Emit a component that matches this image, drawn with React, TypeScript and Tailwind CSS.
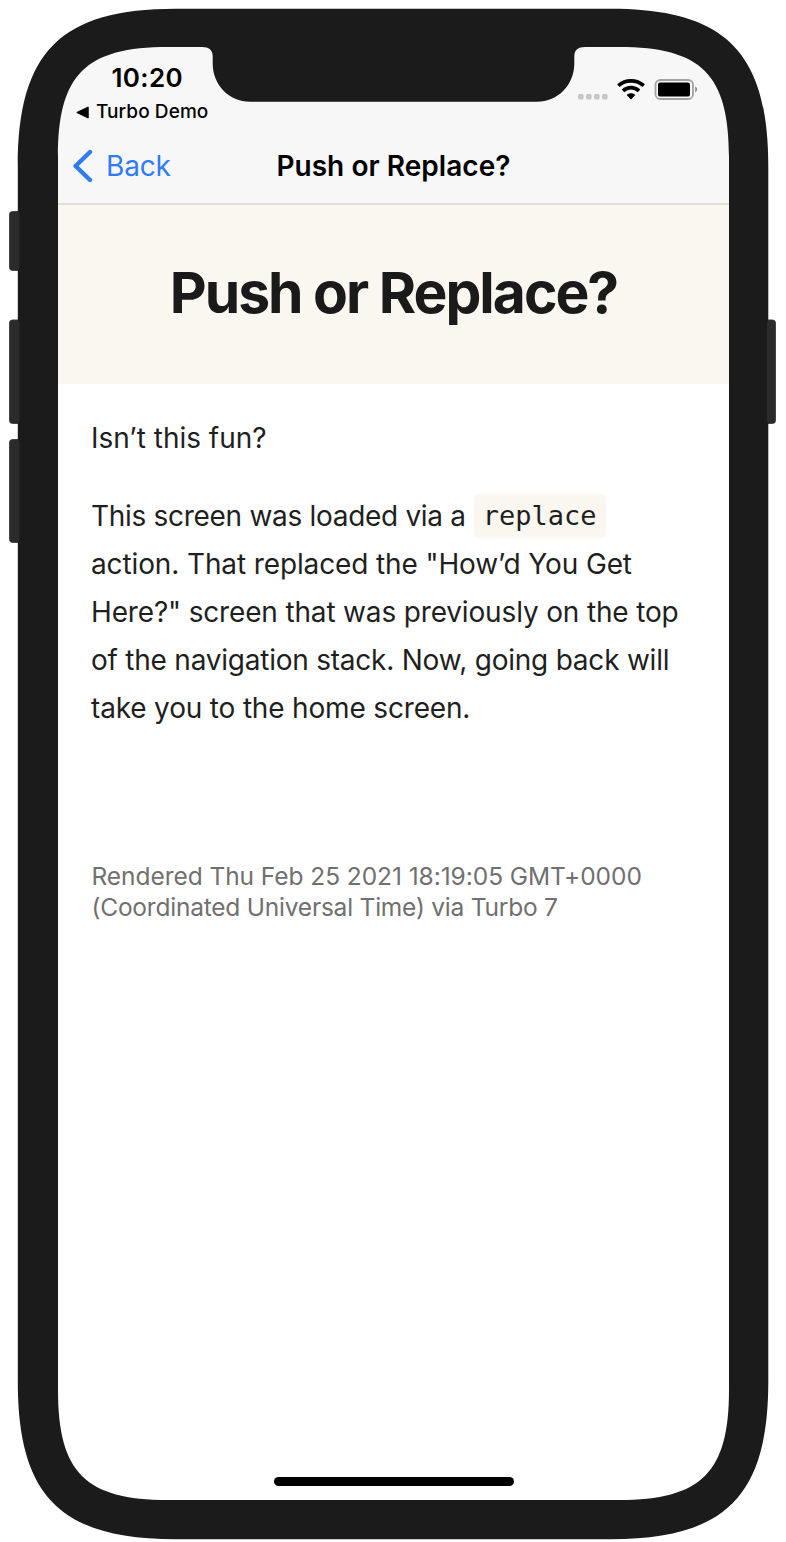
// Rounded rectangle whose corners run along one long cubic: `e` is the corner's extent, `k` its handle distance.
const smooth = (x: number, y: number, w: number, h: number, e: number, k: number) => {
  const R = x + w;
  const B = y + h;
  return [
    `M${x + e} ${y}H${R - e}`,
    `C${R - k} ${y} ${R} ${y + k} ${R} ${y + e}`,
    `V${B - e}`,
    `C${R} ${B - k} ${R - k} ${B} ${R - e} ${B}`,
    `H${x + e}`,
    `C${x + k} ${B} ${x} ${B - k} ${x} ${B - e}`,
    `V${y + e}`,
    `C${x} ${y + k} ${x + k} ${y} ${x + e} ${y}Z`,
  ].join("");
};

function DeviceBezel() {
  return (
    <svg className="pointer-events-none absolute inset-0" width="786" height="1542" viewBox="0 0 786 1542" aria-hidden="true">
      <g fill="#2b2b2b" stroke="#454545" strokeWidth="1">
        <rect x="9.5" y="211.5" width="14" height="59" rx="3" />
        <rect x="9.5" y="320" width="14" height="103.5" rx="3" />
        <rect x="9.5" y="439.5" width="14" height="103" rx="3" />
        <rect x="762" y="320" width="13.5" height="103.5" rx="3" />
      </g>
      <path
        fill="#1b1b1b"
        fillRule="evenodd"
        d={smooth(17.8, 8.8, 750.5, 1530.4, 158, 43) + smooth(58, 47, 671, 1453, 110, 27.5)}
      />
      <path
        fill="#1b1b1b"
        d="M202 46V47C209 47 212.5 50 212.7 56V64C213 85 229 101.7 250 101.7H537C558 101.7 574 85 574.3 64V56C574.5 50 578 47 585 47V46Z"
      />
      <g fill="#2b2b2b">
        <rect x="10" y="212" width="9.5" height="58" rx="2" />
        <rect x="10" y="320.5" width="9.5" height="102.5" rx="2" />
        <rect x="10" y="440" width="9.5" height="102" rx="2" />
        <rect x="767" y="320.5" width="8" height="102.5" rx="2" />
      </g>
    </svg>
  );
}

function StatusIcons() {
  return (
    <svg width="122" height="24" viewBox="0 0 122 24" aria-hidden="true">
      <g fill="#c6c6c7">
        <rect x="0" y="16" width="5.6" height="5.4" rx="1.6" />
        <rect x="8" y="16" width="5.6" height="5.4" rx="1.6" />
        <rect x="16" y="16" width="5.6" height="5.4" rx="1.6" />
        <rect x="24" y="16" width="5.6" height="5.4" rx="1.6" />
      </g>
      <g fill="none" stroke="#000" strokeWidth="3.7">
        <path d="M40.3 7.6C47.5 1.3 58.5 1.3 65.7 7.6" />
        <path d="M45 12.8C49.6 8.6 56.4 8.6 61 12.8" />
      </g>
      <path d="M48.7 17C51 14.7 55 14.7 57.3 17L53.6 20.9Q53 21.5 52.4 20.9Z" fill="#000" />
      <rect x="77.5" y="2" width="37.5" height="19" rx="4.8" fill="none" stroke="#a2a2a2" strokeWidth="1.8" />
      <rect x="80" y="4.4" width="32" height="14.2" rx="2.2" fill="#000" />
      <path d="M117.2 8.6C119.8 9.8 119.8 13.2 117.2 14.4Z" fill="#8a8a8a" />
    </svg>
  );
}

export default function App() {
  return (
    <div className="relative h-[1542px] w-[786px] overflow-hidden bg-white pt-[47px] pl-[58px] font-['Inter',sans-serif]">
      <div className="flex h-[1453px] w-[671px] flex-col bg-white">
        <header className="h-[158px] border-b-2 border-[#dfdfde] bg-[#f7f7f7] text-black">
          <div className="flex h-[81px] justify-between">
            <div className="pt-[15px] pl-[18px]">
              <div className="pl-[35.5px] text-[26px] leading-8 font-semibold tracking-[0.35px]">10:20</div>
              <div className="flex items-center gap-[7px] pt-[3px] text-[19px] leading-[30px] font-medium tracking-[0.08px]">
                <svg width="13" height="13" viewBox="0 0 13 13" aria-hidden="true">
                  <path d="M.8 6.5L12.2 1V12Z" fill="#000" stroke="#000" strokeWidth="1" strokeLinejoin="round" />
                </svg>
                <span>Turbo Demo</span>
              </div>
            </div>
            <div className="pt-[31px] pr-[29px]">
              <StatusIcons />
            </div>
          </div>
          <nav className="grid h-[75px] grid-cols-[200px_1fr_200px] items-center">
            <div className="flex items-center gap-[13px] pl-[14px] text-[#2f7cf6]">
              <svg width="21" height="34" viewBox="0 0 21 34" fill="none" aria-hidden="true">
                <path d="M18 3L3.6 17L18 31" stroke="currentColor" strokeWidth="4.4" strokeLinecap="round" strokeLinejoin="round" />
              </svg>
              <span className="text-[28px] tracking-[-0.15px]">Back</span>
            </div>
            <div className="text-center text-[28px] font-semibold tracking-[0.05px] whitespace-nowrap">Push or Replace?</div>
          </nav>
        </header>
        <div className="flex h-[179px] items-center justify-center bg-[#faf7f0] pb-[3px]">
          <h1 className="text-[57px] leading-[70px] font-bold tracking-[-2px] whitespace-nowrap text-[#1a1a1a]">Push or Replace?</h1>
        </div>
        <main className="px-[33px] pt-[30px] text-[28px] leading-[48px] whitespace-nowrap text-[#1f1f1f]">
          <p>
            <span className="tracking-[-0.03px]">Isn’t this fun?</span>
          </p>
          <p className="mt-[30px] flex flex-col items-start">
            <span className="flex items-center tracking-[-0.3px]">
              This screen was loaded via a
              <code className="ml-2 flex h-[44px] items-center rounded-[5px] bg-[#faf7f0] px-[9px] font-['DejaVu_Sans_Mono',monospace] text-[27px] tracking-[0px]">
                replace
              </code>
            </span>
            <span className="tracking-[-0.12px]">action. That replaced the "How’d You Get</span>
            <span className="tracking-[-0.16px]">Here?" screen that was previously on the top</span>
            <span className="tracking-[-0.23px]">of the navigation stack. Now, going back will</span>
            <span className="tracking-[-0.17px]">take you to the home screen.</span>
          </p>
        </main>
        <footer className="flex flex-col items-start px-[33.5px] pt-[129px] text-[24.5px] leading-[31px] whitespace-nowrap text-[#707070]">
          <span className="tracking-[-0.06px]">Rendered Thu Feb 25 2021 18:19:05 GMT+0000</span>
          <span className="tracking-[-0.22px]">(Coordinated Universal Time) via Turbo 7</span>
        </footer>
        <div className="mt-auto mb-[14px] h-[9px] w-[240px] self-center rounded-full bg-black" />
      </div>
      <DeviceBezel />
    </div>
  );
}
